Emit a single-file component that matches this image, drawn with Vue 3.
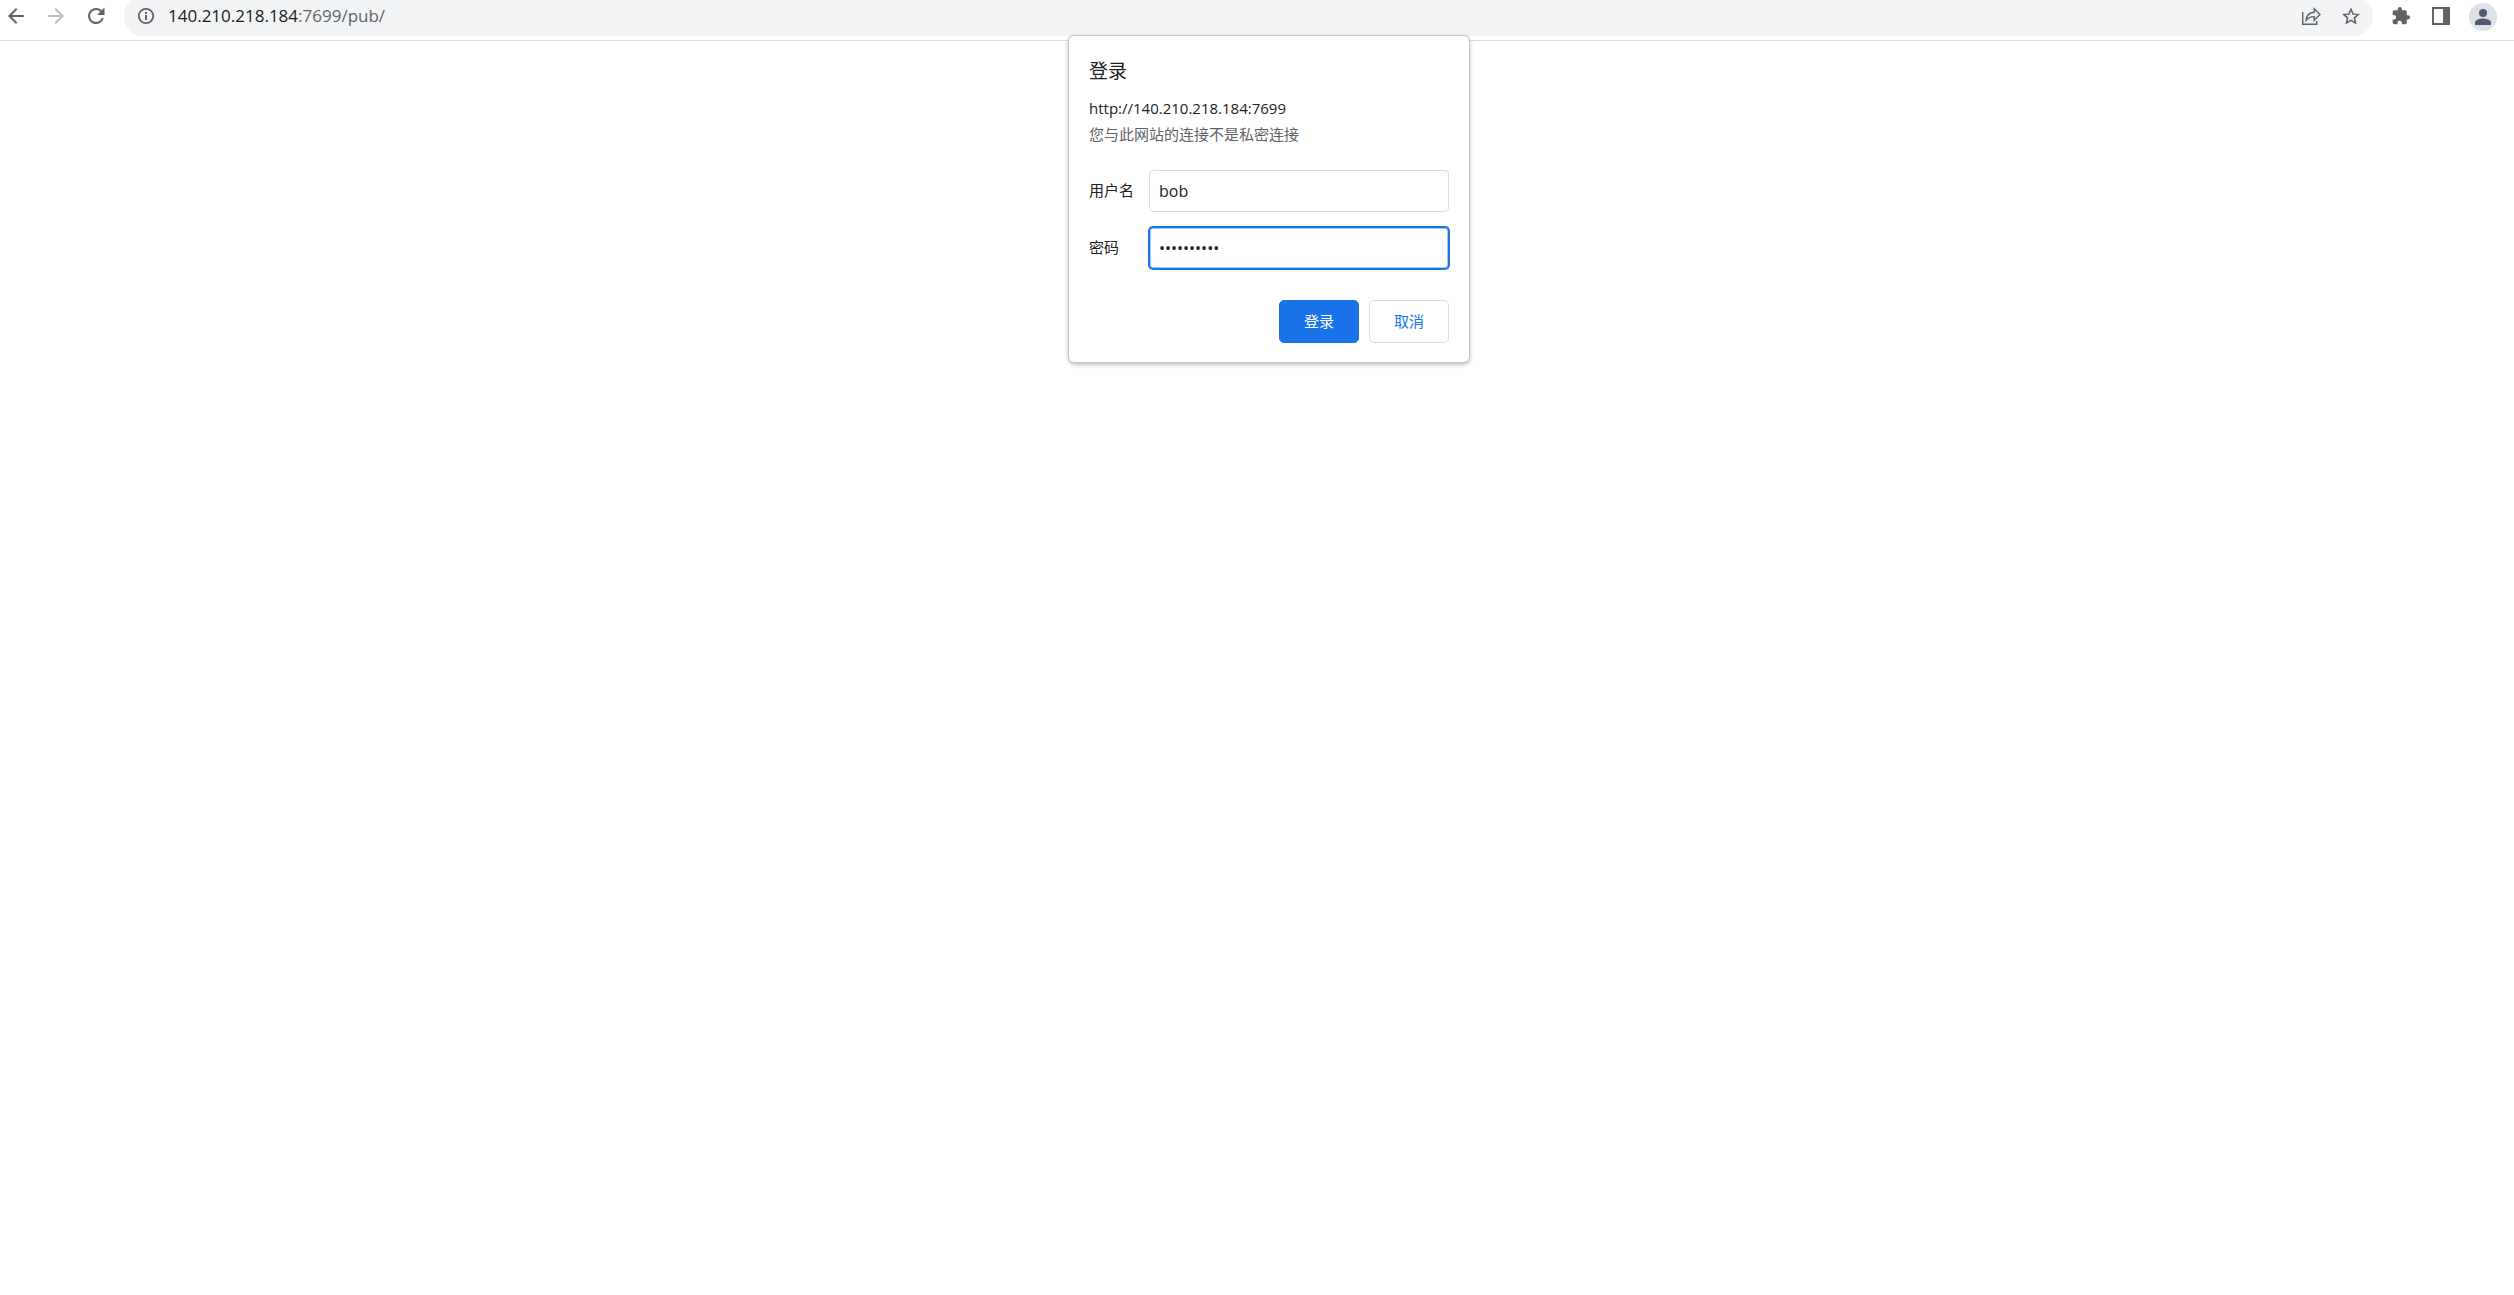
<template>
  <div class="browser">
    <header class="toolbar">
      <nav class="nav-buttons">
        <button type="button" class="icon-button" aria-label="后退">
          <svg viewBox="0 0 24 24"><path d="M20 11H7.83l5.59-5.59L12 4l-8 8 8 8 1.41-1.41L7.83 13H20z" /></svg>
        </button>
        <button type="button" class="icon-button" aria-label="前进" disabled>
          <svg viewBox="0 0 24 24"><path d="M4 11h12.17l-5.59-5.59L12 4l8 8-8 8-1.41-1.41L16.17 13H4z" /></svg>
        </button>
        <button type="button" class="icon-button" aria-label="重新加载">
          <svg viewBox="0 0 24 24">
            <path
              d="M17.65 6.35A7.96 7.96 0 0 0 12 4a8 8 0 1 0 7.73 10h-2.08A6 6 0 1 1 12 6c1.66 0 3.14.69 4.22 1.78L13 11h7.5V3.5z"
            />
          </svg>
        </button>
      </nav>

      <div class="omnibox">
        <button type="button" class="icon-button" aria-label="查看网站信息">
          <svg viewBox="0 0 24 24">
            <circle cx="12" cy="12" r="7.2" fill="none" stroke="currentColor" stroke-width="1.8" />
            <path d="M11 11h2v5h-2zM11 8h2v2h-2z" />
          </svg>
        </button>
        <a class="address" href="#"><span class="host">140.210.218.184</span>:7699/pub/</a>
        <div class="omnibox-actions">
          <button type="button" class="icon-button" aria-label="分享此页面">
            <svg viewBox="0 0 24 24" fill="none" stroke="currentColor" stroke-width="1.4">
              <path d="M3.7 8v12.3h14V17" />
              <path d="M15.2 4.8v3.4C10 8.6 7.4 11.6 7.2 16.3c2-2.7 4.3-3.7 8-3.7v3.6l5.7-5.7z" />
            </svg>
          </button>
          <button type="button" class="icon-button" aria-label="为此标签页添加书签">
            <svg viewBox="0 0 24 24">
              <path
                fill-rule="evenodd"
                d="M21 10l-6.3-.54L12 3.5 9.3 9.46 3 10l4.77 4.2-1.44 6.3L12 17.16l5.67 3.34-1.44-6.3zM12 15.4l-3.4 2.05.9-3.87-3-2.6 3.96-.34L12 7l1.54 3.64 3.96.34-3 2.6.9 3.87z"
              />
            </svg>
          </button>
        </div>
      </div>

      <div class="browser-actions">
        <button type="button" class="icon-button" aria-label="扩展程序">
          <svg viewBox="0 0 24 24">
            <path
              d="M19 11.2h-1.2V7.9c0-.9-.7-1.6-1.6-1.6h-3.3V5.2a2.1 2.1 0 0 0-4.2 0v1.1H5.3c-.9 0-1.6.7-1.6 1.6V11h1.2a2.2 2.2 0 0 1 0 4.4H3.7v3.2c0 .9.7 1.6 1.6 1.6h3.2V19a2.2 2.2 0 0 1 4.4 0v1.2h3.3c.9 0 1.6-.7 1.6-1.6v-3.2H19a2.1 2.1 0 0 0 0-4.2z"
            />
          </svg>
        </button>
        <button type="button" class="icon-button" aria-label="侧边栏">
          <svg viewBox="0 0 24 24">
            <path fill-rule="evenodd" d="M3 3h18v18H3zM5 5v14h9V5z" />
          </svg>
        </button>
        <button type="button" class="icon-button avatar" aria-label="个人资料">
          <svg viewBox="0 0 24 24">
            <circle cx="12" cy="8" r="4" />
            <path d="M12 13.5c-2.7 0-8 1.35-8 4V20h16v-2.5c0-2.65-5.3-4-8-4z" />
          </svg>
        </button>
      </div>
    </header>

    <form class="dialog" role="dialog" aria-labelledby="dialog-title" @submit.prevent>
      <h1 id="dialog-title">登录</h1>
      <p>http://140.210.218.184:7699</p>
      <p class="notice">您与此网站的连接不是私密连接</p>

      <div class="fields">
        <label for="username">用户名</label>
        <input id="username" v-model="username" type="text" autocomplete="off" />
        <label for="password">密码</label>
        <input id="password" v-model="password" class="active" type="password" autocomplete="off" />
      </div>

      <div class="buttons">
        <button type="submit" class="primary">登录</button>
        <button type="button">取消</button>
      </div>
    </form>
  </div>
</template>

<script setup>
import { ref } from 'vue'

const username = ref('bob')
const password = ref('0123456789')
</script>

<style>
body {
  margin: 0;
  background: #ffffff;
}
</style>

<style scoped>
.browser {
  position: relative;
  min-height: 100vh;
  color: #202124;
  font-family: 'Open Sans', 'Noto Sans CJK SC', sans-serif;
  font-size: 15px;
}

.toolbar {
  display: flex;
  height: 40px;
  border-bottom: 1px solid #dadce0;
  overflow: hidden;
}

.nav-buttons {
  display: flex;
  gap: 16px;
  padding: 4px 16px 0 4px;
}

.icon-button {
  display: flex;
  align-items: center;
  justify-content: center;
  width: 24px;
  height: 24px;
  padding: 0;
  border: none;
  background: none;
  color: #5f6368;
}

.icon-button:disabled {
  color: #babcbe;
}

.icon-button svg {
  width: 24px;
  height: 24px;
}

.icon-button svg:not([fill]) {
  fill: currentColor;
}

.omnibox {
  display: flex;
  flex: 1;
  align-items: center;
  height: 40px;
  margin-top: -4px;
  padding: 0 10px;
  border-radius: 20px;
  background: #f1f3f4;
  box-sizing: border-box;
}

.address {
  flex: 1;
  margin-left: 10px;
  color: #5f6368;
  font-size: 17px;
  line-height: 24px;
  text-decoration: none;
}

.host {
  color: #202124;
}

.omnibox-actions {
  display: flex;
  gap: 16px;
}

.browser-actions {
  display: flex;
  gap: 16px;
  padding: 4px 17px 0 16px;
}

.avatar {
  width: 28px;
  height: 28px;
  margin-top: -1px;
  border-radius: 50%;
  background: #dee1e6;
  color: #515c70;
}

/* anchored under the address bar, over the page */
.dialog {
  position: absolute;
  top: 36px;
  left: calc(50% + 12px);
  width: 400px;
  padding: 20px 20px 19px;
  border-radius: 5px;
  background: #ffffff;
  box-shadow:
    0 0 0 1px #c4c6c8,
    0 2px 5px rgba(0, 0, 0, 0.35);
  box-sizing: border-box;
  transform: translateX(-50%);
}

h1 {
  margin: 0 0 10px;
  font-size: 19px;
  font-weight: 400;
  line-height: 30px;
}

p {
  margin: 0;
  line-height: 24px;
}

.notice {
  margin-top: 2px;
  color: #5f6368;
}

.fields {
  display: grid;
  grid-template-columns: 45px 1fr;
  align-items: center;
  gap: 15px;
  margin-top: 24px;
}

label {
  padding-bottom: 3px;
}

input {
  width: 100%;
  height: 42px;
  padding: 0 9px;
  border: 1px solid #dadce0;
  border-radius: 4px;
  outline: none;
  background: #ffffff;
  color: #202124;
  font-family: inherit;
  font-size: 16px;
  box-sizing: border-box;
}

input.active {
  border-color: #1a73e8;
  box-shadow:
    0 0 0 1px #1a73e8,
    inset 0 0 0 1px #a3c7f6;
}

.buttons {
  display: flex;
  justify-content: flex-end;
  gap: 10px;
  margin-top: 31px;
}

.buttons button {
  width: 80px;
  height: 43px;
  padding: 0 0 3px;
  border: 1px solid #dadce0;
  border-radius: 5px;
  background: #ffffff;
  color: #1a73e8;
  font-family: inherit;
  font-size: 15px;
}

.buttons .primary {
  border-color: #1a73e8;
  background: #1a73e8;
  color: #ffffff;
}
</style>
